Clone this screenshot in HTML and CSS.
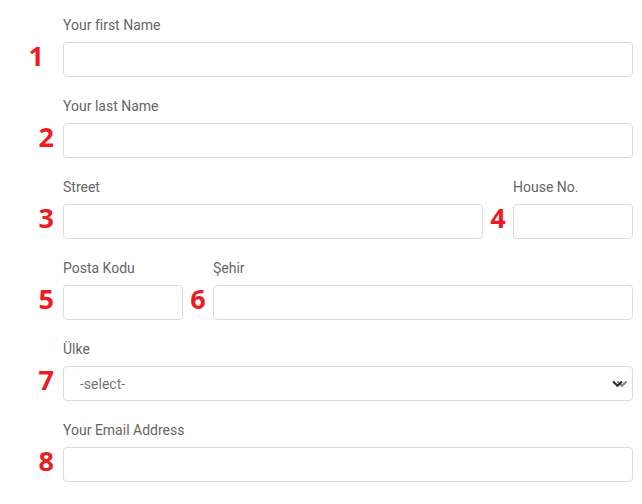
FILE: index.html
```html
<!DOCTYPE html>
<html lang="tr">
<head>
<meta charset="utf-8">
<title>Form</title>
<link rel="stylesheet" href="styles.css">
</head>
<body>
<form class="form">
  <div class="row">
    <span class="num num--lead num--one">1</span>
    <div class="field field--grow">
      <label class="label">Your first Name</label>
      <input class="input" type="text">
    </div>
  </div>
  <div class="row">
    <span class="num num--lead">2</span>
    <div class="field field--grow">
      <label class="label">Your last Name</label>
      <input class="input" type="text">
    </div>
  </div>
  <div class="row">
    <span class="num num--lead">3</span>
    <div class="field field--wide">
      <label class="label">Street</label>
      <input class="input" type="text">
    </div>
    <span class="num num--gap">4</span>
    <div class="field field--small">
      <label class="label">House No.</label>
      <input class="input" type="text">
    </div>
  </div>
  <div class="row">
    <span class="num num--lead">5</span>
    <div class="field field--small">
      <label class="label">Posta Kodu</label>
      <input class="input" type="text">
    </div>
    <span class="num num--gap">6</span>
    <div class="field field--wide">
      <label class="label">Şehir</label>
      <input class="input" type="text">
    </div>
  </div>
  <div class="row">
    <span class="num num--lead">7</span>
    <div class="field field--grow">
      <label class="label">Ülke</label>
      <div class="select-wrap">
        <select class="input select">
          <option>-select-</option>
        </select>
        <svg class="select-arrow" width="18" height="8" viewBox="0 0 18 8" aria-hidden="true">
          <polyline points="5.5,1.5 10,5.8 14.5,1.5" fill="none" stroke="#7a8696" stroke-width="2.2"/>
          <polyline points="1,1.5 5.5,5.8 10,1.5" fill="none" stroke="#2c2f3a" stroke-width="2.2"/>
        </svg>
      </div>
    </div>
  </div>
  <div class="row">
    <span class="num num--lead">8</span>
    <div class="field field--grow">
      <label class="label">Your Email Address</label>
      <input class="input" type="email">
    </div>
  </div>
</form>
</body>
</html>
```

FILE: styles.css
```css
* {
  box-sizing: border-box;
}

body {
  margin: 0;
  background: #ffffff;
  font-family: Roboto, "Liberation Sans", Arial, sans-serif;
}

.form {
  display: flex;
  flex-direction: column;
  gap: 19px;
  padding: 15px 9px 0 0;
}

.row {
  display: flex;
  align-items: flex-start;
}

.num {
  flex: none;
  padding-top: 27px;
  font-family: "Open Sans", "DejaVu Sans", sans-serif;
  font-weight: 700;
  font-size: 27px;
  line-height: 27px;
  color: #ed1c24;
}

.num--lead {
  width: 63px;
  text-align: right;
  padding-right: 9px;
}

.num--one {
  padding-right: 19px;
}

.num--gap {
  width: 30px;
  text-align: center;
}

.field {
  display: flex;
  flex-direction: column;
  gap: 7px;
}

.field--grow {
  flex: 1;
}

.field--wide {
  width: 420px;
}

.field--small {
  width: 120px;
}

.label {
  font-size: 14px;
  line-height: 20px;
  color: #666666;
}

.input {
  display: block;
  width: 100%;
  height: 35px;
  margin: 0;
  border: 1px solid #dcdcdc;
  border-radius: 4px;
  background: #ffffff;
  font-family: Roboto, "Liberation Sans", Arial, sans-serif;
  font-size: 14px;
  color: #777777;
  outline: none;
}

.select-wrap {
  position: relative;
}

.select {
  appearance: none;
  -webkit-appearance: none;
  padding: 0 0 0 16px;
}

.select-arrow {
  position: absolute;
  right: 3px;
  top: 14px;
}
```
